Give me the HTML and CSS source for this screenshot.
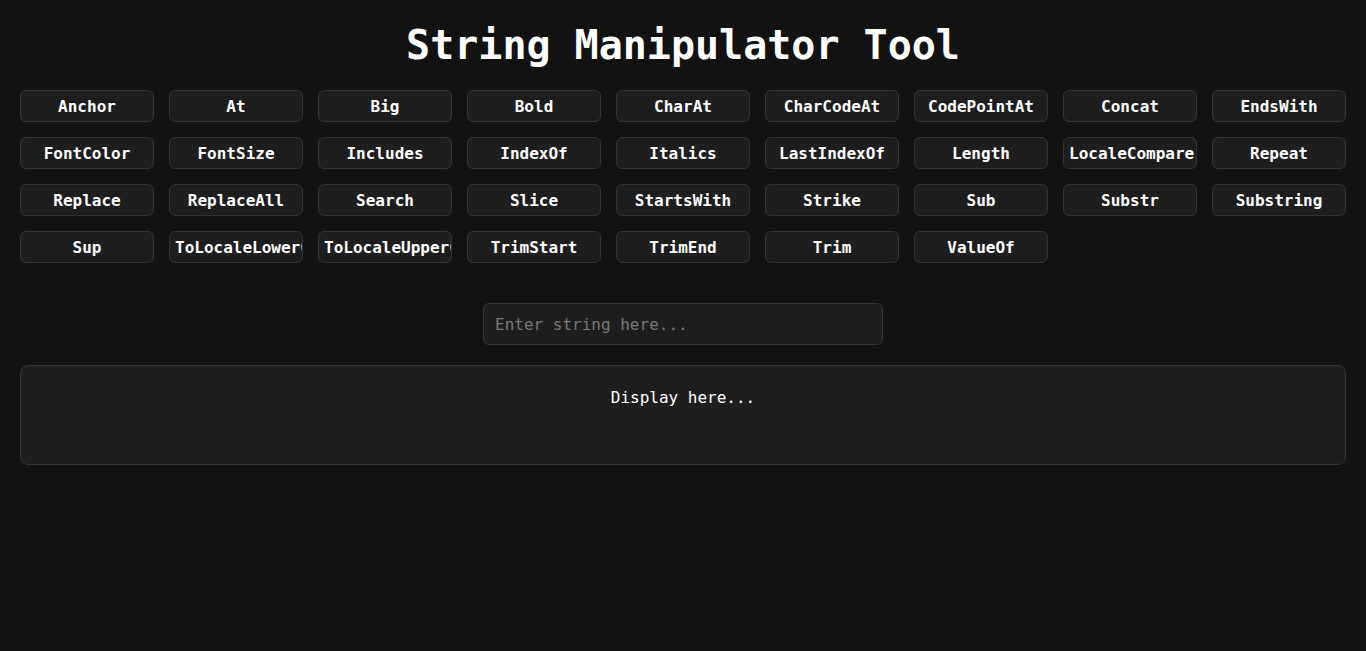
FILE: index.html
```html
<!DOCTYPE html>
<html lang="en">
<head>
<meta charset="utf-8">
<title>String Manipulator Tool</title>
<link rel="stylesheet" href="styles.css">
</head>
<body>
<main class="app">
  <h1 class="title">String Manipulator Tool</h1>
  <div class="methods">
    <button class="method">Anchor</button>
    <button class="method">At</button>
    <button class="method">Big</button>
    <button class="method">Bold</button>
    <button class="method">CharAt</button>
    <button class="method">CharCodeAt</button>
    <button class="method">CodePointAt</button>
    <button class="method">Concat</button>
    <button class="method">EndsWith</button>
    <button class="method">FontColor</button>
    <button class="method">FontSize</button>
    <button class="method">Includes</button>
    <button class="method">IndexOf</button>
    <button class="method">Italics</button>
    <button class="method">LastIndexOf</button>
    <button class="method">Length</button>
    <button class="method">LocaleCompare</button>
    <button class="method">Repeat</button>
    <button class="method">Replace</button>
    <button class="method">ReplaceAll</button>
    <button class="method">Search</button>
    <button class="method">Slice</button>
    <button class="method">StartsWith</button>
    <button class="method">Strike</button>
    <button class="method">Sub</button>
    <button class="method">Substr</button>
    <button class="method">Substring</button>
    <button class="method">Sup</button>
    <button class="method">ToLocaleLowerCase</button>
    <button class="method">ToLocaleUpperCase</button>
    <button class="method">TrimStart</button>
    <button class="method">TrimEnd</button>
    <button class="method">Trim</button>
    <button class="method">ValueOf</button>
  </div>
  <div class="input-row">
    <input class="string-input" type="text" placeholder="Enter string here...">
  </div>
  <div class="display">Display here...</div>
</main>
</body>
</html>
```
FILE: styles.css
```css
* { box-sizing: border-box; }
html, body {
  margin: 0;
  background: #121212;
  color: #ffffff;
  font-family: "DejaVu Sans Mono", "Liberation Mono", monospace;
}
.app {
  padding: 0 20px;
}
.title {
  margin: 0;
  padding-top: 21px;
  padding-bottom: 21px;
  font-size: 40px;
  line-height: 48px;
  font-weight: bold;
  text-align: center;
}
.methods {
  display: grid;
  grid-template-columns: repeat(9, 134px);
  column-gap: 15px;
  row-gap: 15px;
}
.method {
  height: 32px;
  padding: 0 5px;
  background: #1e1e1e;
  border: 1px solid #333333;
  border-radius: 6px;
  color: #ffffff;
  font-family: "DejaVu Sans Mono", "Liberation Mono", monospace;
  font-size: 16px;
  font-weight: bold;
  text-align: center;
  white-space: nowrap;
  overflow: hidden;
}
.input-row {
  display: flex;
  justify-content: center;
  margin-top: 40px;
}
.string-input {
  width: 400px;
  height: 42px;
  padding: 0 11px;
  background: #1e1e1e;
  border: 1px solid #333333;
  border-radius: 6px;
  color: #ffffff;
  font-family: "DejaVu Sans Mono", "Liberation Mono", monospace;
  font-size: 16px;
  outline: none;
}
.string-input::placeholder {
  color: #777777;
}
.display {
  margin-top: 20px;
  height: 100px;
  padding-top: 22px;
  background: #1e1e1e;
  border: 1px solid #333333;
  border-radius: 8px;
  font-size: 16px;
  line-height: 20px;
  text-align: center;
}
```
